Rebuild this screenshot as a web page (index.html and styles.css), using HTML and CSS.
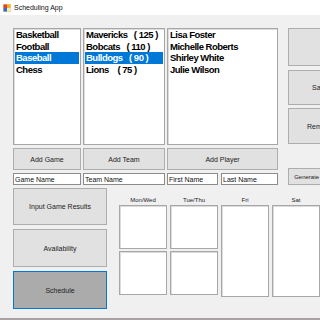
FILE: index.html
```html
<!DOCTYPE html>
<html lang="en">
<head>
    <meta charset="UTF-8">
    <meta name="viewport" content="width=device-width, initial-scale=1.0">
    <title>Scheduling App</title>
    <link rel="stylesheet" href="styles.css">
</head>
<body>
<div class="window">
    <div class="titlebar">
        <svg class="app-icon" width="8" height="8" viewBox="0 0 8 8">
            <rect x="0" y="0" width="8" height="8" fill="#f4d27a"/>
            <rect x="0.5" y="0.5" width="3.5" height="3.5" fill="#e0402c"/>
            <rect x="4" y="0.5" width="3.5" height="3.5" fill="#f2b233"/>
            <rect x="0.5" y="4" width="3.5" height="3.5" fill="#2f6fd0"/>
            <rect x="4" y="4" width="3.5" height="3.5" fill="#f7e9b0"/>
        </svg>
        <span class="title">Scheduling App</span>
    </div>

    <div class="top">
        <ul class="listbox">
            <li>Basketball</li>
            <li>Football</li>
            <li class="selected">Baseball</li>
            <li>Chess</li>
        </ul>
        <ul class="listbox">
            <li>Mavericks   ( 125 )</li>
            <li>Bobcats   ( 110 )</li>
            <li class="selected">Bulldogs   ( 90 )</li>
            <li>Lions    ( 75 )</li>
        </ul>
        <ul class="listbox">
            <li>Lisa Foster</li>
            <li>Michelle Roberts</li>
            <li>Shirley White</li>
            <li>Julie Wilson</li>
        </ul>

        <div class="side">
            <button class="btn side-load"></button>
            <button class="btn side-save">Save</button>
            <button class="btn side-remove">Remove</button>
            <button class="btn side-generate">Generate Schedule</button>
        </div>

        <button class="btn">Add Game</button>
        <button class="btn">Add Team</button>
        <button class="btn">Add Player</button>

        <input class="textbox" type="text" value="Game Name">
        <input class="textbox" type="text" value="Team Name">
        <div class="name-pair">
            <input class="textbox first-name" type="text" value="First Name">
            <input class="textbox last-name" type="text" value="Last Name">
        </div>
    </div>

    <div class="bottom">
        <div class="nav">
            <button class="btn nav-btn first">Input Game Results</button>
            <button class="btn nav-btn">Availability</button>
            <button class="btn nav-btn active">Schedule</button>
        </div>

        <div class="schedule">
            <div class="day">
                <div class="day-label">Mon/Wed</div>
                <div class="slot"></div>
                <div class="slot"></div>
            </div>
            <div class="day">
                <div class="day-label">Tue/Thu</div>
                <div class="slot"></div>
                <div class="slot"></div>
            </div>
            <div class="day">
                <div class="day-label">Fri</div>
                <div class="slot tall"></div>
            </div>
            <div class="day">
                <div class="day-label">Sat</div>
                <div class="slot tall"></div>
            </div>
        </div>
    </div>
</div>
</body>
</html>
```

FILE: styles.css
```css
html, body {
    margin: 0;
    padding: 0;
    overflow: hidden;
}
body {
    background-color: #f0f0f0;
    font-family: "Liberation Sans", Arial, sans-serif;
    color: #222;
}
.window {
    width: 320px;
    height: 320px;
    box-sizing: border-box;
    border-bottom: 2px solid #aaa2a2;
    overflow: hidden;
}

/* title bar */
.titlebar {
    height: 15px;
    background-color: #fff;
    display: flex;
    align-items: center;
    padding-left: 3px;
    gap: 3px;
}
.app-icon {
    display: block;
}
.title {
    font-size: 7px;
    color: #111;
}

/* top area: lists, add buttons, text boxes */
.top {
    display: grid;
    grid-template-columns: 68px 82px 111px 64px;
    grid-template-rows: 117px 22px 12px;
    column-gap: 2px;
    row-gap: 3px;
    margin: 13px 0 0 13px;
}
.listbox {
    list-style: none;
    margin: 0;
    padding: 0 1px;
    background-color: #fff;
    border: 1px solid #a7a7a7;
    box-shadow: inset 1px 1px 0 #dcdcdc;
    font-size: 9.5px;
    font-weight: bold;
    letter-spacing: -0.5px;
    color: #000;
}
.listbox li {
    line-height: 11.5px;
    padding-left: 1px;
    white-space: pre;
}
.listbox li.selected {
    background-color: #0078d7;
    color: #fff;
}

.btn {
    font-family: "Liberation Sans", Arial, sans-serif;
    font-size: 7px;
    color: #222;
    background-color: #e1e1e1;
    border: 1px solid #adadad;
    padding: 0;
    margin: 0;
    white-space: nowrap;
}

.side {
    grid-column: 4;
    grid-row: 1 / 4;
    margin-left: 8px;
    display: flex;
    flex-direction: column;
    width: 64px;
}
.side-load {
    height: 38px;
}
.side-save {
    height: 35px;
    margin-top: 4px;
}
.side-remove {
    height: 36px;
    margin-top: 3px;
}
.side-generate {
    height: 17px;
    margin-top: auto;
    font-size: 6px;
}

.textbox {
    box-sizing: border-box;
    width: 100%;
    height: 12px;
    margin: 0;
    padding: 0 1px;
    border: 1px solid #8c8c8c;
    background-color: #fff;
    font-family: "Liberation Sans", Arial, sans-serif;
    font-size: 7px;
    color: #111;
}
.name-pair {
    display: flex;
    gap: 3px;
}
.first-name {
    width: 51px;
    flex: none;
}
.last-name {
    flex: 1;
}

/* bottom area: navigation and schedule */
.bottom {
    display: flex;
    gap: 12px;
    margin: 3px 0 0 13px;
}
.nav {
    width: 95px;
    display: flex;
    flex-direction: column;
    gap: 4px;
}
.nav-btn {
    height: 38px;
}
.nav-btn.first {
    height: 37px;
}
.nav-btn.active {
    background-color: #ababab;
    border-color: #0078d7;
}

.schedule {
    display: grid;
    grid-template-columns: repeat(4, 48px);
    column-gap: 3px;
    padding-top: 8px;
}
.day {
    display: flex;
    flex-direction: column;
    gap: 2px;
}
.day-label {
    font-size: 6px;
    line-height: 9px;
    height: 9px;
    margin-bottom: -2px;
    text-align: center;
    color: #222;
}
.slot {
    height: 44px;
    box-sizing: border-box;
    background-color: #fff;
    border: 1px solid #a7a7a7;
    box-shadow: inset 1px 1px 0 #dcdcdc;
}
.slot.tall {
    height: 92px;
}
```
